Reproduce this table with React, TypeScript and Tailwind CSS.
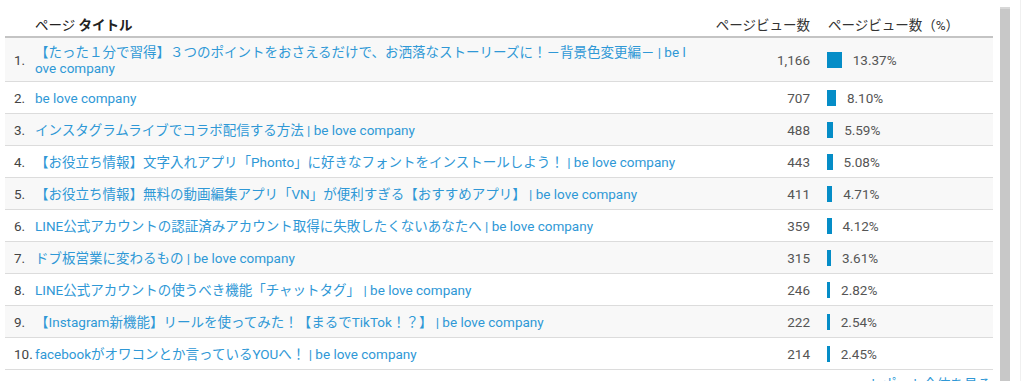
import React from 'react';

interface Row {
  title: React.ReactNode;
  views: string;
  pct: number;
}

const rows: Row[] = [
  {
    title: (
      <>
        【たった１分で習得】３つのポイントをおさえるだけで、お洒落なストーリーズに！－背景色変更編－ | be l
        <br />
        ove company
      </>
    ),
    views: '1,166',
    pct: 13.37,
  },
  { title: 'be love company', views: '707', pct: 8.1 },
  { title: 'インスタグラムライブでコラボ配信する方法 | be love company', views: '488', pct: 5.59 },
  { title: '【お役立ち情報】文字入れアプリ「Phonto」に好きなフォントをインストールしよう！ | be love company', views: '443', pct: 5.08 },
  { title: '【お役立ち情報】無料の動画編集アプリ「VN」が便利すぎる【おすすめアプリ】 | be love company', views: '411', pct: 4.71 },
  { title: 'LINE公式アカウントの認証済みアカウント取得に失敗したくないあなたへ | be love company', views: '359', pct: 4.12 },
  { title: 'ドブ板営業に変わるもの | be love company', views: '315', pct: 3.61 },
  { title: 'LINE公式アカウントの使うべき機能「チャットタグ」 | be love company', views: '246', pct: 2.82 },
  { title: '【Instagram新機能】リールを使ってみた！【まるでTikTok！？】 | be love company', views: '222', pct: 2.54 },
  { title: 'facebookがオワコンとか言っているYOUへ！ | be love company', views: '214', pct: 2.45 },
];

const font = { fontFamily: "Roboto, 'Noto Sans CJK JP', sans-serif" };

export default function App() {
  return (
    <div className="w-[1024px] h-[381px] overflow-hidden bg-white flex text-[13.5px]" style={font}>
      <div className="ml-[5px] w-[988px] flex flex-col">
        {/* header */}
        <div className="shrink-0 h-[38px] flex items-end pb-[3px] border-b-2 border-[#c4c4c4] text-[#222] leading-[16px]">
          <div className="w-[30px]" />
          <div className="w-[665px]">
            ページ <span className="font-bold">タイトル</span>
          </div>
          <div className="w-[117px] text-right pr-[7px] text-[#333]">ページビュー数</div>
          <div className="flex-1 pl-[11px] text-[#333]">ページビュー数（%）</div>
        </div>

        {rows.map((r, i) => (
          <div
            key={i}
            className={`shrink-0 flex border-b border-[#dcdcdc] leading-[16px] ${i % 2 === 0 ? 'bg-[#f8f8f8]' : 'bg-white'} ${
              i === 0 ? 'h-[44px]' : 'h-[32px]'
            }`}
          >
            <div className="w-[30px] pl-[9px] flex items-center text-[#444]">{i + 1}.</div>
            <div className={`w-[665px] text-[#2f98d6] ${i === 0 ? 'pt-[6px]' : 'flex items-center'}`}>
              {r.title}
            </div>
            <div className="w-[117px] pr-[7px] flex items-center justify-end text-[#555]">{r.views}</div>
            <div className="flex-1 pl-[10px] flex items-center text-[#555]">
              <div className="h-[16px] bg-[#058dc7]" style={{ width: `${r.pct * 1.1}px` }} />
              <span className="ml-[11px]">{r.pct.toFixed(2)}%</span>
            </div>
          </div>
        ))}

        <div className="shrink-0 flex justify-end pt-[4px] pr-[2px] text-[#2f98d6]">レポート全体を見る</div>
      </div>

      <div className="ml-[7px] mt-[7px] w-[10px] h-[400px] bg-[#c8c8c8] border-t-2 border-[#d8d8d8]" />
      <div className="ml-[10px] w-[1px] h-full bg-[#f0f0f0]" />
    </div>
  );
}
